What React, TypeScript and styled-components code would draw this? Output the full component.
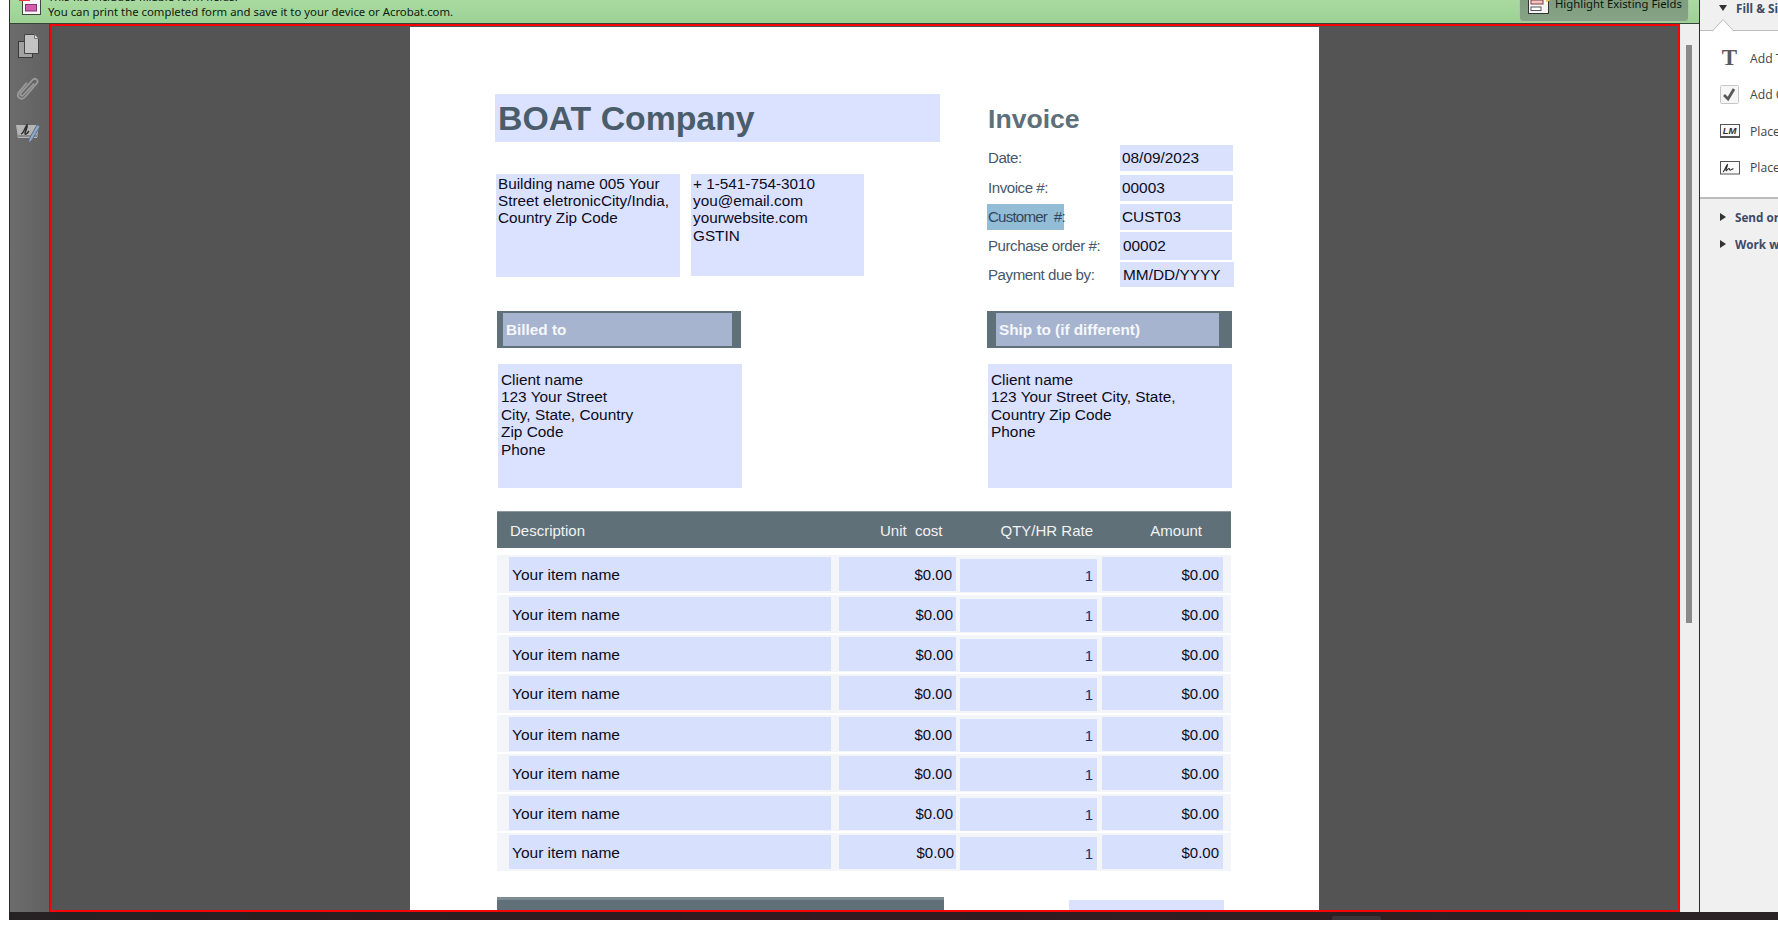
import React from 'react';
import styled, { createGlobalStyle } from 'styled-components';

const GlobalStyle = createGlobalStyle`
  html, body {
    margin: 0;
    padding: 0;
    height: 936px;
    overflow: hidden;
    background: #ffffff;
  }
  * {
    box-sizing: border-box;
  }
`;

const Window = styled.div`
  width: 1769px;
  height: 920px;
  margin-left: 9px;
  display: flex;
  flex-direction: column;
  overflow: hidden;
`;

const Workspace = styled.div`
  height: 912px;
  display: flex;
`;

const Main = styled.div`
  width: 1690px;
  display: flex;
  flex-direction: column;
  border-left: 1px solid #2c2c2c;
`;

const NoticeBar = styled.div`
  height: 24px;
  flex: none;
  display: flex;
  align-items: flex-end;
  overflow: hidden;
  padding-left: 9px;
  padding-right: 10px;
  background: linear-gradient(#a9daa1, #9dd294);
  border-bottom: 1px solid #36453a;
`;

const NoticeIcon = styled.svg`
  flex: none;
  width: 22px;
  height: 22px;
  margin-bottom: 8px;
`;

const NoticeText = styled.div`
  margin-left: 7px;
  padding-bottom: 4px;
  font: 11.35px/15px 'Noto Sans', sans-serif;
  color: #101a10;
  white-space: nowrap;
`;

const HighlightButton = styled.div`
  margin-left: auto;
  margin-bottom: 1px;
  width: 170px;
  height: 34px;
  flex: none;
  display: flex;
  align-items: flex-end;
  padding: 0 0 10px 8px;
  background: linear-gradient(#7c9a7b, #86a385);
  border: 1px solid #aec6a9;
  border-radius: 4px;
  font: 11.3px/14px 'Noto Sans', sans-serif;
  color: #0c140c;
  white-space: nowrap;
`;

const HighlightIcon = styled.svg`
  flex: none;
  width: 24px;
  height: 22px;
  margin-right: 3px;
  margin-bottom: -3px;
`;

const Body = styled.div`
  flex: 1;
  min-height: 0;
  display: flex;
`;

const NavRail = styled.div`
  width: 40px;
  flex: none;
  display: flex;
  flex-direction: column;
  align-items: center;
  padding: 10px 3px 0 0;
  gap: 19px;
  background: linear-gradient(90deg, #6c6c6c, #616161);
  border-right: 1px solid #444;
`;

const RailIcon = styled.svg`
  width: 26px;
  height: 24px;
`;

const Viewer = styled.div`
  width: 1630px;
  flex: none;
  display: flex;
  justify-content: center;
  padding: 1px 1px 0 0;
  border: 2px solid #f40606;
  background: #545454;
  overflow: hidden;
`;

const Gutter = styled.div`
  flex: 1;
  padding: 21px 7px 0 6px;
  background: #efefef;
`;

const ScrollThumb = styled.div`
  height: 578px;
  background: #8a8a8a;
`;

const Page = styled.div`
  width: 909px;
  flex: none;
  height: 900px;
  padding: 67px 0 0 85px;
  background: #ffffff;
  font-family: 'Liberation Sans', Arial, sans-serif;
  color: #0c0c1c;
`;

const TopSection = styled.div`
  display: grid;
  grid-template-columns: 492px 1fr;
`;

const CompanyName = styled.div`
  width: 445px;
  height: 48px;
  padding-left: 3px;
  margin-bottom: 32px;
  background: #dbe2ff;
  font-size: 33.8px;
  font-weight: 700;
  line-height: 49px;
  color: #4b5d6b;
`;

const ContactRow = styled.div`
  display: flex;
  align-items: flex-start;
  gap: 11px;
  margin-left: 1px;
`;

const ContactBox = styled.div<{ $width: number; $height: number }>`
  width: ${(p) => p.$width}px;
  height: ${(p) => p.$height}px;
  padding: 1px 0 0 2px;
  background: #dbe2ff;
  font-size: 15.3px;
  line-height: 17.2px;
  white-space: pre-line;
`;

const InvoiceTitle = styled.div`
  height: 51px;
  padding: 9px 0 0 1px;
  font-size: 26.6px;
  font-weight: 700;
  line-height: 32px;
  color: #5d6f7b;
`;

const MetaRow = styled.div<{ $height: number; $gap: number }>`
  height: ${(p) => p.$height}px;
  margin-bottom: ${(p) => p.$gap}px;
  display: flex;
`;

const MetaLabelCell = styled.div`
  width: 133px;
  flex: none;
  display: flex;
  align-items: center;
`;

const MetaLabel = styled.div<{ $selected?: boolean }>`
  height: 26px;
  padding: 1px 0 0 1px;
  width: ${(p) => (p.$selected ? '77px' : 'auto')};
  background: ${(p) => (p.$selected ? '#93bcd6' : 'transparent')};
  font-size: 15.1px;
  letter-spacing: ${(p) => (p.$selected ? '-0.8px' : '-0.46px')};
  line-height: 24px;
  color: ${(p) => (p.$selected ? '#33475c' : '#47586a')};
  white-space: pre;
`;

const MetaValue = styled.div<{ $width: number; $indent: number }>`
  width: ${(p) => p.$width}px;
  padding-left: ${(p) => p.$indent}px;
  display: flex;
  align-items: center;
  background: #d9e1fd;
  font-size: 15.4px;
`;

const PartySection = styled.div`
  display: grid;
  grid-template-columns: 492px 1fr;
  margin-top: 24px;
`;

const PartyHeader = styled.div<{ $width: number; $shift: number; $inset: number }>`
  width: ${(p) => p.$width}px;
  height: 37px;
  margin-left: ${(p) => p.$shift}px;
  padding: 2px 0 2px ${(p) => p.$inset}px;
  background: #5f7079;
`;

const PartyHeaderInner = styled.div<{ $width: number }>`
  width: ${(p) => p.$width}px;
  height: 33px;
  padding-left: 3px;
  background: #a6b4d0;
  font-size: 15.3px;
  font-weight: 700;
  line-height: 33px;
  color: #f6f7fb;
`;

const PartyBox = styled.div<{ $shift: number }>`
  width: 244px;
  height: 124px;
  margin: 16px 0 0 ${(p) => p.$shift}px;
  padding: 7px 0 0 3px;
  background: #dbe2ff;
  font-size: 15.4px;
  line-height: 17.4px;
  white-space: pre-line;
`;

const ItemsTable = styled.div`
  width: 734px;
  margin: 23px 0 0 2px;
`;

const TableHeader = styled.div`
  height: 37px;
  margin-bottom: 7px;
  display: grid;
  grid-template-columns: 383px 61px 152px 109px;
  align-items: center;
  background: #5f7078;
  border-top: 1px solid #8b989e;
  font-size: 15px;
  color: #f1f3f4;
`;

const HeaderCell = styled.div<{ $end?: boolean }>`
  padding-left: ${(p) => (p.$end ? 0 : 13)}px;
  text-align: ${(p) => (p.$end ? 'right' : 'left')};
  white-space: pre;
`;

const ItemRow = styled.div<{ $pitch: number }>`
  height: ${(p) => p.$pitch - 2}px;
  margin-bottom: 2px;
  padding: 2px 0 0 12px;
  display: grid;
  grid-template-columns: 322px 125px 141px 126px;
  align-items: start;
  background: #f3f5f8;
`;

const ItemField = styled.div`
  height: 34px;
  padding: 1px 0 0 3px;
  display: flex;
  align-items: center;
  background: #d7e0fc;
  font-size: 15.5px;
`;

const MoneyField = styled.div<{ $pad: number; $gap: number }>`
  height: 34px;
  margin-left: ${(p) => p.$gap}px;
  padding-right: ${(p) => p.$pad}px;
  display: flex;
  align-items: center;
  justify-content: flex-end;
  background: #d7e0fc;
  font-size: 15px;
`;

const QtyField = styled.div`
  height: 33px;
  margin-top: 2px;
  margin-left: 4px;
  padding-right: 4px;
  display: flex;
  align-items: center;
  justify-content: flex-end;
  background: #d7e0fc;
  font-size: 15px;
  color: #1c2f76;
`;

const TotalsRow = styled.div`
  margin-top: 26px;
  display: flex;
  align-items: flex-start;
`;

const TotalsBar = styled.div`
  width: 447px;
  height: 30px;
  margin-left: 2px;
  background: #5f7078;
  border-top: 3px solid #7d8c92;
`;

const TotalsField = styled.div`
  width: 155px;
  height: 30px;
  margin: 3px 0 0 125px;
  background: #dbe2ff;
`;

const SidePanel = styled.div`
  width: 79px;
  flex: none;
  position: relative;
  overflow: hidden;
  border-left: 1px solid #2c2c2c;
  background: #f0f0f0;
  font-family: 'Open Sans', sans-serif;
  white-space: nowrap;
`;

const PanelHeader = styled.div`
  height: 31px;
  padding: 1px 0 0 19px;
  display: flex;
  align-items: flex-start;
  border-bottom: 1px solid #bcbcbc;
`;

const Caret = styled.span<{ $open?: boolean }>`
  flex: none;
  width: 0;
  height: 0;
  margin-top: ${(p) => (p.$open ? 4 : 3)}px;
  border-style: solid;
  border-color: transparent;
  border-width: ${(p) => (p.$open ? '6px 4px 0 4px' : '4px 0 4px 6px')};
  border-top-color: ${(p) => (p.$open ? '#333' : 'transparent')};
  border-left-color: ${(p) => (p.$open ? 'transparent' : '#333')};
`;

const SectionTitle = styled.div`
  margin-left: 9px;
  font-size: 11.7px;
  font-weight: 700;
  line-height: 14px;
  color: #3c4a68;
`;

const HeaderNotch = styled.svg`
  position: absolute;
  left: 12px;
  top: 19px;
  width: 22px;
  height: 13px;
`;

const PanelTools = styled.div`
  padding: 9px 0 11px 0;
  background: #ffffff;
  border-bottom: 2px solid #bcbcbc;
`;

const ToolRow = styled.div`
  height: 36.5px;
  display: grid;
  grid-template-columns: 50px 1fr;
  align-items: center;
  font-size: 12.2px;
  color: #444;
`;

const ToolIconSlot = styled.div`
  display: flex;
  justify-content: center;
  padding-left: 9px;
`;

const ToolGlyph = styled.span`
  font: 700 23px/24px 'Liberation Serif', serif;
  color: #5a5a5a;
`;

const CheckBox = styled.svg`
  width: 19px;
  height: 19px;
`;

const InitialsBox = styled.span`
  width: 20px;
  height: 14px;
  display: flex;
  align-items: center;
  justify-content: center;
  background: #fafafa;
  border: 1px solid #555;
  border-bottom-width: 2px;
  font: italic 700 9.5px/11px 'Liberation Sans', sans-serif;
  color: #333;
`;

const SignBox = styled.svg`
  width: 20px;
  height: 14px;
`;

const PanelSections = styled.div`
  padding: 11px 0 0 20px;
  display: flex;
  flex-direction: column;
  gap: 13px;
`;

const SectionLink = styled.div`
  display: flex;
  align-items: flex-start;
`;

const StatusStrip = styled.div`
  height: 8px;
  flex: none;
  display: flex;
  align-items: flex-end;
  padding-left: 1323px;
  background: linear-gradient(90deg, #262123, #34191f 45%, #2a2326);
`;

const StatusTab = styled.div`
  width: 49px;
  height: 4px;
  background: #3a3337;
  border-radius: 2px 2px 0 0;
`;

const metaRows = [
  { label: 'Date:', value: '08/09/2023', height: 26, gap: 4, width: 113, indent: 2 },
  { label: 'Invoice #:', value: '00003', height: 26, gap: 3, width: 113, indent: 2 },
  { label: 'Customer  #:', value: 'CUST03', height: 26, gap: 2, width: 112, indent: 2, selected: true },
  { label: 'Purchase order #:', value: '00002', height: 28, gap: 2, width: 112, indent: 3 },
  { label: 'Payment due by:', value: 'MM/DD/YYYY', height: 25, gap: 0, width: 114, indent: 3 },
];

const itemRows = [
  { pitch: 40, pad: 4 },
  { pitch: 40, pad: 3 },
  { pitch: 39, pad: 3 },
  { pitch: 41, pad: 4 },
  { pitch: 39, pad: 4 },
  { pitch: 40, pad: 4 },
  { pitch: 39, pad: 3 },
  { pitch: 40, pad: 2 },
];

const App: React.FC = () => {
  return (
    <>
      <GlobalStyle />
      <Window>
        <Workspace>
          <Main>
            <NoticeBar>
              <NoticeIcon viewBox="0 0 22 22">
                <rect x="3.5" y="0" width="18" height="21.5" fill="#f7f7f7" stroke="#444" />
                <rect x="0" y="0" width="11" height="8" fill="#e23b3b" />
                <rect x="6.5" y="11.5" width="11" height="6.5" fill="#cf62ac" stroke="#8a2f74" />
              </NoticeIcon>
              <NoticeText>
                This file includes fillable form fields.
                <br />
                You can print the completed form and save it to your device or Acrobat.com.
              </NoticeText>
              <HighlightButton>
                <HighlightIcon viewBox="0 0 24 22">
                  <rect x="0.5" y="0" width="20" height="21.5" fill="#f5f5f5" stroke="#333" />
                  <rect x="3" y="8" width="12" height="4" fill="#eec6c6" stroke="#8a3a3a" />
                  <rect x="3" y="15" width="10" height="3.5" fill="#fff" stroke="#555" />
                  <path d="M18 6l2-4 2 4 2 .5-3 2.5-3 1z" fill="#f3c14d" />
                </HighlightIcon>
                Highlight Existing Fields
              </HighlightButton>
            </NoticeBar>
            <Body>
              <NavRail>
                <RailIcon viewBox="0 0 26 24">
                  <rect x="3.5" y="7.5" width="14" height="16" fill="#a2a2a2" stroke="#3a3a3a" />
                  <path d="M9.5 0.5h10l4 4v15h-14z" fill="#c3c3c3" stroke="#444" />
                  <path d="M19.5 0.5v4h4" fill="#e3e3e3" stroke="#777" />
                </RailIcon>
                <RailIcon viewBox="0 0 26 24">
                  <path
                    d="M19 6.5L8.5 18c-1.6 1.8-4 .2-2.8-1.8L17.5 3c2.6-2.8 6.6.2 4.4 3.2L10 20c-3.4 4-9.4 0-6.4-4.4L12 5.5"
                    fill="none"
                    stroke="#9a9a9a"
                    strokeWidth="1.8"
                  />
                </RailIcon>
                <RailIcon viewBox="0 0 26 24">
                  <path d="M1 5h23l-2 13H3z" fill="#b5b5b5" />
                  <rect x="2" y="15" width="21" height="2" fill="#8a8a8a" />
                  <path d="M6 14c3-1 4-7 6-9 1 3-3 8-2 9s3-2 4-3" fill="none" stroke="#2e2e2e" strokeWidth="1.5" />
                  <path d="M14 19L22 5l3 1.5L17 20l-3 3z" fill="#8fa7c6" stroke="#5e6f86" />
                </RailIcon>
              </NavRail>
              <Viewer>
                <Page>
                  <TopSection>
                    <div>
                      <CompanyName>BOAT Company</CompanyName>
                      <ContactRow>
                        <ContactBox $width={184} $height={103}>
                          {'Building name 005 Your\nStreet eletronicCity/India,\nCountry Zip Code'}
                        </ContactBox>
                        <ContactBox $width={173} $height={102}>
                          {'+ 1-541-754-3010\nyou@email.com\nyourwebsite.com\nGSTIN'}
                        </ContactBox>
                      </ContactRow>
                    </div>
                    <div>
                      <InvoiceTitle>Invoice</InvoiceTitle>
                      {metaRows.map((row) => (
                        <MetaRow key={row.label} $height={row.height} $gap={row.gap}>
                          <MetaLabelCell>
                            <MetaLabel $selected={row.selected}>{row.label}</MetaLabel>
                          </MetaLabelCell>
                          <MetaValue $width={row.width} $indent={row.indent}>
                            {row.value}
                          </MetaValue>
                        </MetaRow>
                      ))}
                    </div>
                  </TopSection>

                  <PartySection>
                    <div>
                      <PartyHeader $width={244} $shift={2} $inset={6}>
                        <PartyHeaderInner $width={229}>Billed to</PartyHeaderInner>
                      </PartyHeader>
                      <PartyBox $shift={3}>
                        {'Client name\n123 Your Street\nCity, State, Country\nZip Code\nPhone'}
                      </PartyBox>
                    </div>
                    <div>
                      <PartyHeader $width={245} $shift={0} $inset={9}>
                        <PartyHeaderInner $width={223}>Ship to (if different)</PartyHeaderInner>
                      </PartyHeader>
                      <PartyBox $shift={1}>
                        {'Client name\n123 Your Street City, State,\nCountry Zip Code\nPhone'}
                      </PartyBox>
                    </div>
                  </PartySection>

                  <ItemsTable>
                    <TableHeader>
                      <HeaderCell>Description</HeaderCell>
                      <HeaderCell $end>{'Unit  cost'}</HeaderCell>
                      <HeaderCell $end>QTY/HR Rate</HeaderCell>
                      <HeaderCell $end>Amount</HeaderCell>
                    </TableHeader>
                    {itemRows.map((row, index) => (
                      <ItemRow key={index} $pitch={row.pitch}>
                        <ItemField>Your item name</ItemField>
                        <MoneyField $pad={row.pad} $gap={8}>$0.00</MoneyField>
                        <QtyField>1</QtyField>
                        <MoneyField $pad={4} $gap={5}>$0.00</MoneyField>
                      </ItemRow>
                    ))}
                  </ItemsTable>

                  <TotalsRow>
                    <TotalsBar />
                    <TotalsField />
                  </TotalsRow>
                </Page>
              </Viewer>
              <Gutter>
                <ScrollThumb />
              </Gutter>
            </Body>
          </Main>
          <SidePanel>
            <PanelHeader>
              <Caret $open />
              <SectionTitle>Fill &amp; Sign</SectionTitle>
            </PanelHeader>
            <HeaderNotch viewBox="0 0 22 13">
              <path d="M0 12.5L11 0.5l11 12" fill="#ffffff" stroke="#bcbcbc" />
            </HeaderNotch>
            <PanelTools>
              <ToolRow>
                <ToolIconSlot><ToolGlyph>T</ToolGlyph></ToolIconSlot>
                <span>Add Text</span>
              </ToolRow>
              <ToolRow>
                <ToolIconSlot>
                  <CheckBox viewBox="0 0 19 19">
                    <rect x="0.5" y="0.5" width="18" height="18" rx="1" fill="#f7f7f7" stroke="#c6c6c6" />
                    <path d="M4 10l4 4 6-10" fill="none" stroke="#5a5a5a" strokeWidth="2.8" />
                  </CheckBox>
                </ToolIconSlot>
                <span>Add Check</span>
              </ToolRow>
              <ToolRow>
                <ToolIconSlot><InitialsBox>LM</InitialsBox></ToolIconSlot>
                <span>Place Initials</span>
              </ToolRow>
              <ToolRow>
                <ToolIconSlot>
                  <SignBox viewBox="0 0 20 14">
                    <rect x="0.5" y="0.5" width="19" height="12.5" fill="#fafafa" stroke="#555" />
                    <path d="M3 11c2-1 3-7 4.500-7.500 0 2-2 5-1.500 6s2-2 3-2 0 2 1.500 1.500 1.500-1.500 3-1" fill="none" stroke="#333" strokeWidth="1.1" />
                  </SignBox>
                </ToolIconSlot>
                <span>Place Signature</span>
              </ToolRow>
            </PanelTools>
            <PanelSections>
              <SectionLink>
                <Caret />
                <SectionTitle>Send or Collect Signatures</SectionTitle>
              </SectionLink>
              <SectionLink>
                <Caret />
                <SectionTitle>Work with Certificates</SectionTitle>
              </SectionLink>
            </PanelSections>
          </SidePanel>
        </Workspace>
        <StatusStrip>
          <StatusTab />
        </StatusStrip>
      </Window>
    </>
  );
};

export default App;
